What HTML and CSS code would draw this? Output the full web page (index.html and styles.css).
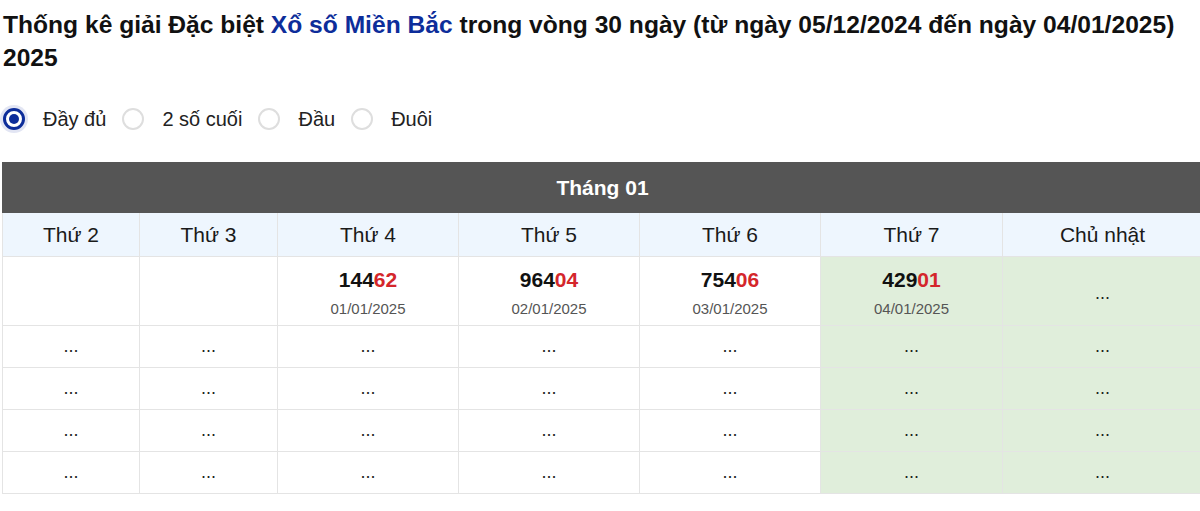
FILE: index.html
```html
<!DOCTYPE html>
<html lang="vi">
<head>
<meta charset="utf-8">
<title>Thống kê giải Đặc biệt</title>
<link rel="stylesheet" href="styles.css">
</head>
<body>
<div class="page">
  <h1 class="title">Thống kê giải Đặc biệt <span class="link">Xổ số Miền Bắc</span> trong vòng 30 ngày (từ ngày 05/12/2024 đến ngày 04/01/2025) 2025</h1>

  <div class="options">
    <label class="option"><span class="radio checked"></span><span class="opt-label">Đầy đủ</span></label>
    <label class="option"><span class="radio"></span><span class="opt-label">2 số cuối</span></label>
    <label class="option"><span class="radio"></span><span class="opt-label">Đầu</span></label>
    <label class="option"><span class="radio"></span><span class="opt-label">Đuôi</span></label>
  </div>

  <div class="table-wrap">
    <table class="cal">
      <colgroup>
        <col class="c-narrow1"><col class="c-narrow2"><col class="c-wide"><col class="c-wide"><col class="c-wide"><col class="c-wide2"><col class="c-last">
      </colgroup>
      <thead>
        <tr><th colspan="7" class="month">Tháng 01</th></tr>
        <tr class="days">
          <th>Thứ 2</th><th>Thứ 3</th><th>Thứ 4</th><th>Thứ 5</th><th>Thứ 6</th><th>Thứ 7</th><th>Chủ nhật</th>
        </tr>
      </thead>
      <tbody>
        <tr class="first">
          <td></td>
          <td></td>
          <td><div class="num">144<span class="red">62</span></div><div class="date">01/01/2025</div></td>
          <td><div class="num">964<span class="red">04</span></div><div class="date">02/01/2025</div></td>
          <td><div class="num">754<span class="red">06</span></div><div class="date">03/01/2025</div></td>
          <td class="wk"><div class="num">429<span class="red">01</span></div><div class="date">04/01/2025</div></td>
          <td class="wk">...</td>
        </tr>
        <tr><td>...</td><td>...</td><td>...</td><td>...</td><td>...</td><td class="wk">...</td><td class="wk">...</td></tr>
        <tr><td>...</td><td>...</td><td>...</td><td>...</td><td>...</td><td class="wk">...</td><td class="wk">...</td></tr>
        <tr><td>...</td><td>...</td><td>...</td><td>...</td><td>...</td><td class="wk">...</td><td class="wk">...</td></tr>
        <tr><td>...</td><td>...</td><td>...</td><td>...</td><td>...</td><td class="wk">...</td><td class="wk">...</td></tr>
      </tbody>
    </table>
  </div>
</div>
</body>
</html>
```

FILE: styles.css
```css
html, body {
  margin: 0;
  padding: 0;
  background: #fff;
  overflow: hidden;
}

body {
  font-family: "Liberation Sans", Arial, sans-serif;
  color: #111;
}

.page {
  padding: 0 0 0 2px;
}

.title {
  margin: 0;
  padding: 8px 0 0 1px;
  font-size: 24.6px;
  line-height: 33px;
  font-weight: bold;
  color: #111;
}

.link {
  color: #0d2d9a;
}

.options {
  display: flex;
  align-items: center;
  gap: 16px;
  margin-top: 33px;
  padding-left: 1px;
  height: 24px;
}

.option {
  display: flex;
  align-items: center;
  gap: 18px;
  font-size: 20px;
  color: #222;
}

.radio {
  box-sizing: border-box;
  width: 22px;
  height: 22px;
  border-radius: 50%;
  border: 2px solid #dedede;
  background: #fff;
  position: relative;
}

.radio.checked {
  border: 3px solid #0d2d9a;
  box-shadow: 0 0 0 3px rgba(13, 45, 154, 0.12);
}

.radio.checked::after {
  content: "";
  position: absolute;
  left: 3px;
  top: 3px;
  width: 10px;
  height: 10px;
  border-radius: 50%;
  background: #0d2d9a;
}

.table-wrap {
  margin-top: 31px;
  width: 1198px;
  overflow: hidden;
}

.cal {
  width: 1200px;
  table-layout: fixed;
  border-collapse: collapse;
  font-family: "Liberation Sans", Arial, sans-serif;
}

.c-narrow1 { width: 137px; }
.c-narrow2 { width: 138px; }
.c-wide { width: 181px; }
.c-wide2 { width: 182px; }
.c-last { width: 200px; }

.cal th, .cal td {
  border: 1px solid #e4e4e4;
  text-align: center;
  padding: 0;
}

.month {
  background: #555;
  color: #fff;
  font-size: 21px;
  font-weight: bold;
  height: 49px;
  border-color: #555 !important;
}

.days th {
  background: #eef6fe;
  font-weight: normal;
  font-size: 21px;
  color: #1a1a1a;
  height: 43px;
}

.cal td {
  height: 41px;
  font-size: 18px;
  color: #222;
}

.first td {
  height: 63px;
  padding-top: 5px;
}

.cal td.wk {
  background: #e0eedb;
}

.num {
  font-size: 21px;
  font-weight: bold;
  color: #111;
  line-height: 26px;
}

.red {
  color: #d4262b;
}

.date {
  font-size: 15px;
  color: #555;
  line-height: 22px;
  margin-top: 5px;
}
```
